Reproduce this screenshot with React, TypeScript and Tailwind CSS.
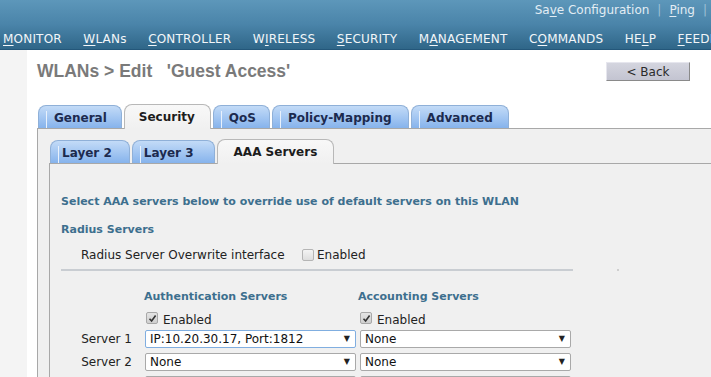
import React from 'react';

const navItems: [string, number][] = [
  ['MONITOR', 0],
  ['WLANs', 0],
  ['CONTROLLER', 0],
  ['WIRELESS', 1],
  ['SECURITY', 0],
  ['MANAGEMENT', 1],
  ['COMMANDS', 1],
  ['HELP', 2],
  ['FEEDBACK', 0],
];

const Underlined = ({ text, idx }: { text: string; idx: number }) => (
  <span>
    {text.slice(0, idx)}
    <span className="underline underline-offset-2">{text[idx]}</span>
    {text.slice(idx + 1)}
  </span>
);

const BlueTab = ({ label, pl = 'pl-[7px]', pr = 'pr-[16px]' }: { label: string; pl?: string; pr?: string }) => (
  <div className="flex h-[23px] shrink-0 items-stretch rounded-t-[8px] border border-b-0 border-[#8fb0d8] bg-gradient-to-b from-[#c3dbf7] to-[#86b3ec]">
    <div className={`ml-[7px] mt-[5px] flex items-center border-l border-[#e8f1fc] ${pl} ${pr} pb-[4px] text-[12px] font-bold text-[#1c2a4e]`}>
      {label}
    </div>
  </div>
);

const ActiveTab = ({ label, px }: { label: string; px: string }) => (
  <div className={`relative -mb-px flex h-[25px] shrink-0 items-center rounded-t-[8px] border border-b-0 border-[#b8b8b8] bg-gradient-to-b from-[#f8f8f8] to-[#f0f0f0] ${px} pb-[1px] text-[12px] font-bold text-[#1c1c1c]`}>
    {label}
  </div>
);

const Check = ({ checked }: { checked: boolean }) =>
  checked ? (
    <span className="flex h-[12px] w-[12px] items-center justify-center rounded-[2px] border border-[#a8a8a8] bg-gradient-to-b from-[#e4e4e4] to-[#cfcfcf]">
      <svg width="9" height="9" viewBox="0 0 9 9">
        <path d="M1.5 4.8 L3.6 7 L7.6 1.6" fill="none" stroke="#333" strokeWidth="1.6" />
      </svg>
    </span>
  ) : (
    <span className="h-[12px] w-[12px] rounded-[2px] border border-[#b5b5b5] bg-gradient-to-b from-[#f4f4f4] to-[#dedede]" />
  );

const Select = ({ value, focus }: { value: string; focus?: boolean }) => (
  <div className={`flex h-[18px] w-[211px] items-center justify-between rounded-[2px] border bg-white pl-[4px] pr-[5px] text-[12px] text-[#111] ${focus ? 'border-[#80aee0]' : 'border-[#a9a9a9]'}`}>
    <span>{value}</span>
    <span className="text-[8px] text-[#222]">▼</span>
  </div>
);

export default function App() {
  return (
    <div className="h-[377px] w-[711px] overflow-hidden bg-white font-['DejaVu_Sans',sans-serif]">
      <div className="flex h-[50px] flex-col border-b border-[#24577a] bg-gradient-to-b from-[#5d97ba] via-[#4a84a9] to-[#2f6688]">
        <div className="flex h-[20px] shrink-0 items-center justify-end pr-[4px] text-[12px] text-[#e3edf4]">
          <Underlined text="Save Configuration" idx={2} />
          <span className="mx-[8px] text-[#9ec0d6]">|</span>
          <Underlined text="Ping" idx={0} />
          <span className="ml-[8px] text-[#9ec0d6]">|</span>
        </div>
        <div className="flex items-start gap-[21.5px] whitespace-nowrap pl-[3px] pt-[12px] text-[12px] leading-[14px] tracking-[0.2px] text-[#f2f6f9]">
          {navItems.map(([t, i]) => (
            <Underlined key={t} text={t} idx={i} />
          ))}
        </div>
      </div>

      <div className="flex h-[327px]">
        <div className="w-[27px] shrink-0 bg-[#f4f4f4]" />
        <div className="ml-[10px] flex min-h-0 flex-1 flex-col">
          <div className="flex h-[42px] shrink-0 items-center justify-between pr-[21px]">
            <h1 className="font-['Liberation_Sans',sans-serif] text-[17.5px] font-bold text-[#7a7a7a]">
              WLANs &gt; Edit &nbsp;&nbsp;'Guest Access'
            </h1>
            <button className="h-[19px] w-[84px] border border-b-[#8a8a8a] border-l-[#e6e6ee] border-r-[#8a8a8a] border-t-[#e6e6ee] bg-gradient-to-b from-[#d4d5df] to-[#c3c4d1] text-[12px] text-[#2a2a2a]">
              &lt; Back
            </button>
          </div>

          <div className="mt-[12px] flex shrink-0 items-end gap-[2px] border-b border-[#a8a8a8] pl-[1px]">
            <BlueTab label="General" pr="pr-[14px]" />
            <ActiveTab label="Security" px="pl-[14px] pr-[15px]" />
            <BlueTab label="QoS" pr="pr-[13px]" />
            <BlueTab label="Policy-Mapping" pr="pr-[16px]" />
            <BlueTab label="Advanced" pr="pr-[15px]" />
          </div>

          <div className="flex min-h-0 flex-1 flex-col overflow-hidden border-l border-[#a8a8a8] bg-[#f0f0f0] pl-[11px] pt-[10px]">
            <div className="flex shrink-0 items-end gap-[2px] border-b border-[#a8a8a8] pl-[1px]">
              <BlueTab label="Layer 2" pl="pl-[3px]" pr="pr-[17px]" />
              <BlueTab label="Layer 3" pl="pl-[3px]" pr="pr-[20px]" />
              <ActiveTab label="AAA Servers" px="px-[16px]" />
            </div>

            <div className="flex flex-1 shrink-0 flex-col border-l border-[#a8a8a8] pl-[11px] pt-[31px]">
              <p className="h-[14px] shrink-0 text-[11px] font-bold leading-[14px] text-[#3d6f8e]">
                Select AAA servers below to override use of default servers on this WLAN
              </p>
              <p className="mt-[14px] h-[14px] shrink-0 text-[11px] font-bold leading-[14px] text-[#3d6f8e]">
                Radius Servers
              </p>
              <div className="mt-[11px] flex h-[14px] shrink-0 items-center pl-[20px] text-[12px] text-[#222]">
                <span className="w-[221px]">Radius Server Overwrite interface</span>
                <Check checked={false} />
                <span className="ml-[3px]">Enabled</span>
              </div>
              <div className="mt-[7px] flex shrink-0 items-center">
                <div className="h-[2px] w-[512px] bg-[#c9cdd2]" />
                <div className="ml-[44px] h-[2px] w-[2px] bg-[#cfcfcf]" />
              </div>

              <div className="mt-[19px] grid shrink-0 grid-cols-[83px_214px_214px] items-center text-[12px] text-[#222]">
                <div />
                <div className="h-[14px] text-[11px] font-bold leading-[14px] text-[#3d6f8e]">Authentication Servers</div>
                <div className="h-[14px] text-[11px] font-bold leading-[14px] text-[#3d6f8e]">Accounting Servers</div>

                <div />
                <div className="mt-[6px] flex h-[16px] items-center pl-[2px]">
                  <Check checked />
                  <span className="ml-[5px] mt-[4px]">Enabled</span>
                </div>
                <div className="mt-[6px] flex h-[16px] items-center pl-[2px]">
                  <Check checked />
                  <span className="ml-[5px] mt-[4px]">Enabled</span>
                </div>

                <div className="mt-[4px] pr-[12px] text-right">Server 1</div>
                <div className="mt-[4px] pl-[1px]">
                  <Select value="IP:10.20.30.17, Port:1812" focus />
                </div>
                <div className="mt-[4px] pl-[2px]">
                  <Select value="None" />
                </div>

                <div className="mt-[5px] pr-[12px] text-right">Server 2</div>
                <div className="mt-[5px] pl-[1px]">
                  <Select value="None" />
                </div>
                <div className="mt-[5px] pl-[2px]">
                  <Select value="None" />
                </div>

                <div className="mt-[5px] pr-[12px] text-right">Server 3</div>
                <div className="mt-[5px] pl-[1px]">
                  <Select value="None" />
                </div>
                <div className="mt-[5px] pl-[2px]">
                  <Select value="None" />
                </div>
              </div>
            </div>
          </div>
        </div>
      </div>
    </div>
  );
}
